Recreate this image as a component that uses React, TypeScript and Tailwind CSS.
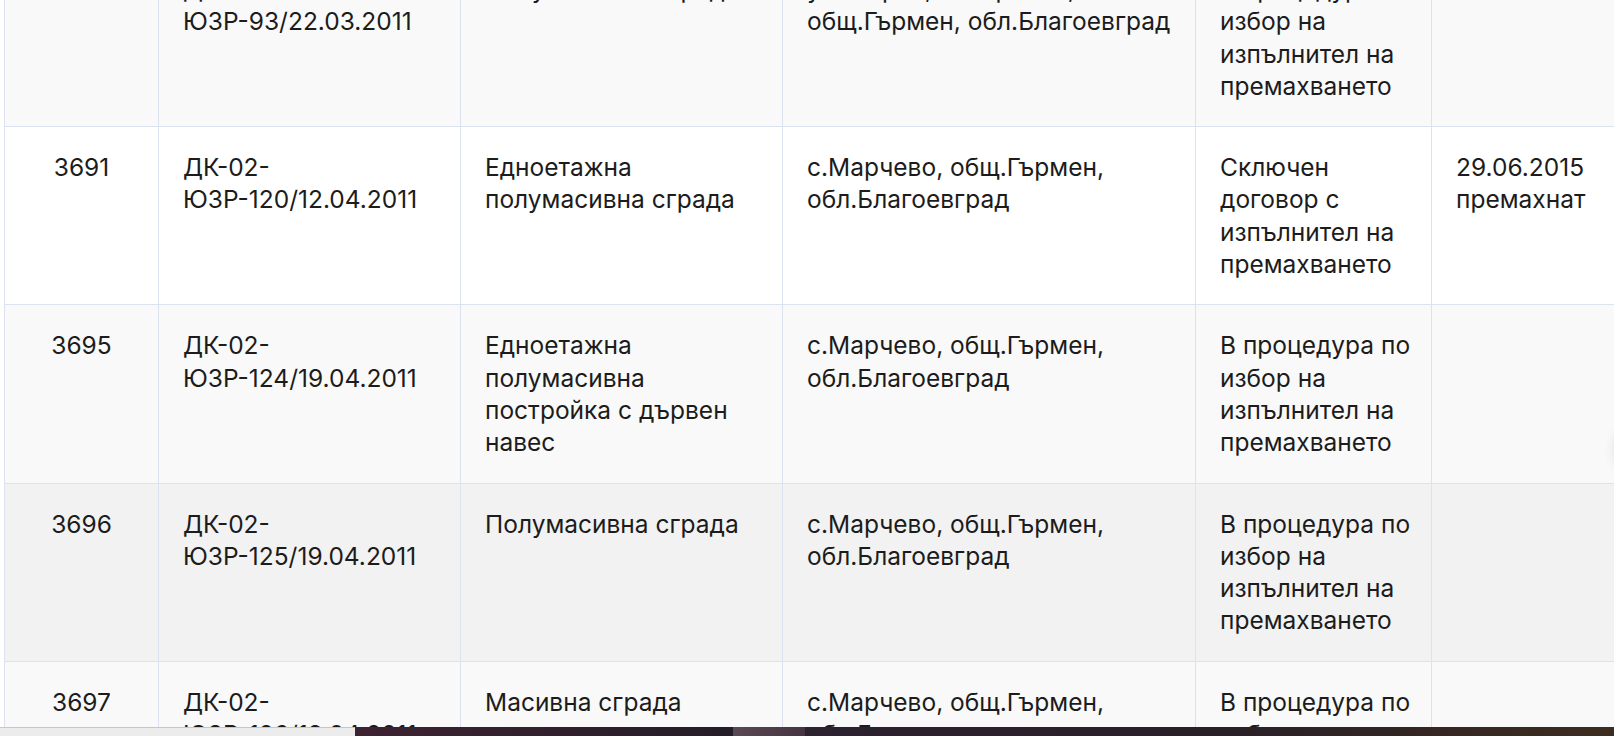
type Row = {
  id: string
  act: string[]
  name: string[]
  place: string[]
  status: string[]
  note: string[]
  bg: string
}

const rows: Row[] = [
  {
    id: '3690',
    act: ['ДК-02-', 'ЮЗР-93/22.03.2011'],
    name: ['Полумасивна сграда'],
    place: ['ул. Първа, с.Марчево,', 'общ.Гърмен, обл.Благоевград'],
    status: ['В процедура по', 'избор на', 'изпълнител на', 'премахването'],
    note: [],
    bg: 'bg-[#f9f9f9]',
  },
  {
    id: '3691',
    act: ['ДК-02-', 'ЮЗР-120/12.04.2011'],
    name: ['Едноетажна', 'полумасивна сграда'],
    place: ['с.Марчево, общ.Гърмен,', 'обл.Благоевград'],
    status: ['Сключен', 'договор с', 'изпълнител на', 'премахването'],
    note: ['29.06.2015', 'премахнат'],
    bg: 'bg-white',
  },
  {
    id: '3695',
    act: ['ДК-02-', 'ЮЗР-124/19.04.2011'],
    name: ['Едноетажна', 'полумасивна', 'постройка с дървен', 'навес'],
    place: ['с.Марчево, общ.Гърмен,', 'обл.Благоевград'],
    status: ['В процедура по', 'избор на', 'изпълнител на', 'премахването'],
    note: [],
    bg: 'bg-[#f9f9f9]',
  },
  {
    id: '3696',
    act: ['ДК-02-', 'ЮЗР-125/19.04.2011'],
    name: ['Полумасивна сграда'],
    place: ['с.Марчево, общ.Гърмен,', 'обл.Благоевград'],
    status: ['В процедура по', 'избор на', 'изпълнител на', 'премахването'],
    note: [],
    bg: 'bg-[#f2f2f2]',
  },
  {
    id: '3697',
    act: ['ДК-02-', 'ЮЗР-126/19.04.2011'],
    name: ['Масивна сграда'],
    place: ['с.Марчево, общ.Гърмен,', 'обл.Благоевград'],
    status: ['В процедура по', 'избор на', 'изпълнител на', 'премахването'],
    note: [],
    bg: 'bg-[#f9f9f9]',
  },
]

function Lines({ lines }: { lines: string[] }) {
  return (
    <>
      {lines.map((l, i) => (
        <div key={i} className="whitespace-nowrap">{l}</div>
      ))}
    </>
  )
}

export default function App() {
  return (
    <div
      lang="bg"
      className="w-[1614px] h-[736px] flex flex-col overflow-hidden bg-white text-[#1c1c1c] text-[24.5px] leading-[32.3px] font-['Inter',sans-serif]"
    >
      <div className="relative h-[727px] overflow-hidden pl-[4px]">
        <div className="-mt-[51px] w-[1680px] border-l border-[#dde2f1]">
          {rows.map(r => (
            <div
              key={r.id}
              className={`grid grid-cols-[154px_302px_322px_413px_236px_236px] border-b border-[#dde2f1] ${r.bg}`}
            >
              <div className="border-r border-[#dde2f1] py-6 text-center">{r.id}</div>
              <div className="border-r border-[#dde2f1] py-6 px-6">
                <Lines lines={r.act} />
              </div>
              <div className="border-r border-[#dde2f1] py-6 px-6">
                <Lines lines={r.name} />
              </div>
              <div className="border-r border-[#dde2f1] py-6 px-6">
                <Lines lines={r.place} />
              </div>
              <div className="border-r border-[#dde2f1] py-6 px-6">
                <Lines lines={r.status} />
              </div>
              <div className="py-6 px-6">
                <Lines lines={r.note} />
              </div>
            </div>
          ))}
        </div>
        <div className="absolute right-[-58px] top-[420px] w-[56px] h-[56px] rounded-full bg-white shadow-[0_2px_14px_rgba(0,0,0,0.14)]" />
      </div>
      <div className="h-[9px] flex">
        <div className="w-[355px] bg-[#ececec] border-t border-[#c6c6c6]" />
        <div className="w-[378px] bg-gradient-to-r from-[#3e2232] to-[#231d27]" />
        <div className="w-[72px] bg-gradient-to-r from-[#5a4853] to-[#453540]" />
        <div className="flex-1 bg-gradient-to-r from-[#2c2230] via-[#281f27] to-[#3d2c1f]" />
      </div>
    </div>
  )
}
